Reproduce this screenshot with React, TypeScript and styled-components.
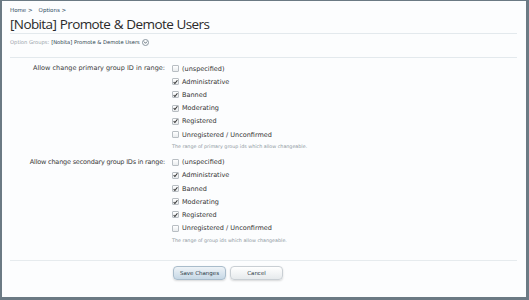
import React from "react";
import styled, { createGlobalStyle } from "styled-components";

const Global = createGlobalStyle`
  html, body { margin: 0; padding: 0; background: #ffffff; }
  * { box-sizing: border-box; }
`;

const Frame = styled.div`
  width: 529px;
  height: 300px;
  border-style: solid;
  border-color: #6b7a84;
  border-width: 1px 3px 3px 2px;
  background: #fcfdfe;
  padding: 5px 9px 0 8px;
  font-family: "DejaVu Sans", sans-serif;
  color: #333;
`;

const Crumbs = styled.div`
  display: flex;
  gap: 6px;
  font-size: 5.5px;
  color: #2e4b5e;
  height: 8px;
  align-items: center;
  span::after {
    content: " >";
  }
`;

const Title = styled.h1`
  margin: 0;
  font-family: "Open Sans", sans-serif;
  font-weight: 400;
  font-size: 13.5px;
  letter-spacing: -0.6px;
  word-spacing: 0.5px;
  color: #2a2a2a;
  line-height: 18px;
  padding-top: 1px;
  border-bottom: 1px solid #e3e9ed;
  height: 20px;
`;

const GroupLine = styled.div`
  font-size: 5.2px;
  color: #9aa4aa;
  height: 24px;
  padding-top: 5px;
  display: flex;
  align-items: flex-start;
  gap: 2px;
  border-bottom: 1px solid #e3e9ed;
  b {
    font-weight: 400;
    color: #2b3f4d;
  }
`;

const Circle = styled.span`
  display: inline-flex;
  width: 7px;
  height: 7px;
  margin-top: -0.5px;
  border: 1px solid #8a96a0;
  border-radius: 50%;
  align-items: center;
  justify-content: center;
`;

const Form = styled.div`
  padding-top: 4px;
  height: 203px;
  border-bottom: 1px solid #e6ebee;
`;

const Row = styled.div`
  display: grid;
  grid-template-columns: 155px 1fr;
  column-gap: 7px;
  margin-bottom: 2.5px;
`;

const Label = styled.div<{ $squeeze?: boolean }>`
  text-align: right;
  font-size: 6.5px;
  letter-spacing: ${(p) => (p.$squeeze ? "-0.2px" : "0")};
  color: #3a3a3a;
  line-height: 13.2px;
`;

const Options = styled.div`
  display: flex;
  flex-direction: column;
`;

const Option = styled.label`
  display: flex;
  align-items: center;
  gap: 3px;
  height: 13.2px;
  font-size: 6.5px;
  color: #333;
`;

const Box = styled.span<{ $on: boolean }>`
  width: 7px;
  height: 7px;
  border: 1px solid #b8bec3;
  border-radius: 1px;
  background: linear-gradient(#ffffff, #e9ecee);
  display: inline-flex;
  align-items: center;
  justify-content: center;
  svg {
    display: ${(p) => (p.$on ? "block" : "none")};
  }
`;

const Hint = styled.div`
  font-size: 4.8px;
  color: #8b969d;
  line-height: 12px;
`;

const Buttons = styled.div`
  display: flex;
  gap: 4px;
  padding: 5px 0 0 163px;
`;

const Button = styled.button<{ $primary?: boolean }>`
  width: 53px;
  height: 14px;
  padding: 0;
  border: 1px solid ${(p) => (p.$primary ? "#a9bccb" : "#c9cfd4")};
  border-radius: 4px;
  background: ${(p) =>
    p.$primary
      ? "linear-gradient(#eef3f7, #c6d8e6)"
      : "linear-gradient(#ffffff, #e6eaed)"};
  font-family: "DejaVu Sans", sans-serif;
  font-size: 5.5px;
  color: #2a3a46;
  box-shadow: 0 1px 2px rgba(0, 0, 0, 0.15);
`;

const Check = () => (
  <svg width="6" height="6" viewBox="0 0 6 6">
    <path d="M0.8 3.2 L2.3 4.8 L5.3 0.9" fill="none" stroke="#333" strokeWidth="1.3" />
  </svg>
);

const Chevron = () => (
  <svg width="5" height="5" viewBox="0 0 5 5">
    <path d="M1 1.6 L2.5 3.3 L4 1.6" fill="none" stroke="#55636c" strokeWidth="0.9" />
  </svg>
);

const groups = [
  { name: "(unspecified)", on: false },
  { name: "Administrative", on: true },
  { name: "Banned", on: true },
  { name: "Moderating", on: true },
  { name: "Registered", on: true },
  { name: "Unregistered / Unconfirmed", on: false },
];

const fields = [
  {
    label: "Allow change primary group ID in range:",
    hint: "The range of primary group ids which allow changeable.",
    squeeze: false,
  },
  {
    label: "Allow change secondary group IDs in range:",
    hint: "The range of group ids which allow changeable.",
    squeeze: true,
  },
];

export default function App() {
  return (
    <>
      <Global />
      <Frame>
        <Crumbs>
          <span>Home</span>
          <span>Options</span>
        </Crumbs>
        <Title>[Nobita] Promote &amp; Demote Users</Title>
        <GroupLine>
          Option Groups: <b>[Nobita] Promote &amp; Demote Users</b>
          <Circle>
            <Chevron />
          </Circle>
        </GroupLine>
        <Form>
          {fields.map((f) => (
            <Row key={f.label}>
              <Label $squeeze={f.squeeze}>{f.label}</Label>
              <Options>
                {groups.map((g) => (
                  <Option key={g.name}>
                    <Box $on={g.on}>
                      <Check />
                    </Box>
                    {g.name}
                  </Option>
                ))}
                <Hint>{f.hint}</Hint>
              </Options>
            </Row>
          ))}
        </Form>
        <Buttons>
          <Button $primary>Save Changes</Button>
          <Button>Cancel</Button>
        </Buttons>
      </Frame>
    </>
  );
}
